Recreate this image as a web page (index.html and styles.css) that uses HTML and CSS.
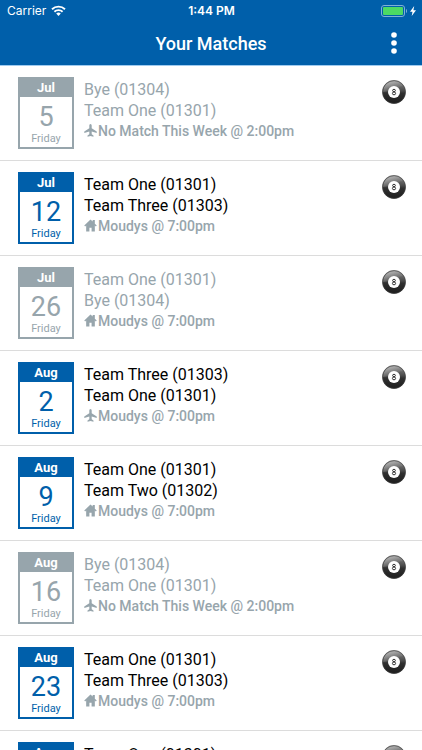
FILE: index.html
```html
<!DOCTYPE html>
<html lang="en">
<head>
    <meta charset="UTF-8">
    <meta name="viewport" content="width=device-width, initial-scale=1">
    <title>Your Matches</title>
    <link rel="stylesheet" href="styles.css">
</head>
<body>
<!-- shared icons -->
<svg class="sprite" aria-hidden="true">
    <defs>
        <linearGradient id="ballShade" x1="0" y1="0" x2="0" y2="1">
            <stop offset="0" stop-color="#8c8c8c"/>
            <stop offset="0.45" stop-color="#4a4a4a"/>
            <stop offset="0.55" stop-color="#303030"/>
            <stop offset="1" stop-color="#1c1c1c"/>
        </linearGradient>
        <linearGradient id="ballShine" x1="0" y1="0" x2="1" y2="1">
            <stop offset="0" stop-color="#fff" stop-opacity="0.5"/>
            <stop offset="0.6" stop-color="#fff" stop-opacity="0.1"/>
        </linearGradient>
    </defs>
    <symbol id="plane" viewBox="0 0 24 24">
        <path d="M23.500 16.500v-2.800L14.200 8V3.200C14.200 1.400 13.300 0 12 0S9.800 1.400 9.800 3.200V8L0.500 13.700v2.800l9.300-2.700v5.200L6.500 21.300V23.500l5.500-1.500 5.500 1.500v-2.200L14.200 19v-5.200z"/>
    </symbol>
    <symbol id="home" viewBox="0 0 24 24">
        <path d="M12 1L0.500 12l1.600 1.800L4 12.200V23h6v-7h4v7h6V12.200l1.900 1.600 1.600-1.800L20 8.600V2h-4v2.800z"/>
    </symbol>
    <symbol id="ball" viewBox="0 0 24 24">
        <circle cx="12" cy="12" r="11.700" fill="url(#ballShade)"/>
        <path d="M1 12a11 11 0 0 1 20-6C15 6 10 12 1 12z" fill="url(#ballShine)"/>
        <circle cx="12" cy="12" r="11.500" fill="none" stroke="#444" stroke-width="0.600"/>
        <circle cx="12" cy="12" r="6" fill="#fff"/>
        <ellipse cx="12" cy="10.500" rx="1.400" ry="1.200" fill="none" stroke="#333" stroke-width="1"/>
        <ellipse cx="12" cy="13.400" rx="1.600" ry="1.400" fill="none" stroke="#333" stroke-width="1"/>
    </symbol>
</svg>

<header class="header">
    <div class="status">
        <div class="carrier">
            Carrier
            <svg class="wifi" viewBox="0 0 15 11" fill="none" stroke="#fff" stroke-width="1.900">
                <path d="M1 4.200a9.400 9.400 0 0 1 13 0M3.400 6.700a6 6 0 0 1 8.200 0"/>
                <path d="M7.500 11L5.200 8.600a3.400 3.400 0 0 1 4.600 0z" fill="#fff" stroke="none"/>
            </svg>
        </div>
        <div class="time">1:44 PM</div>
        <div class="power">
            <svg class="battery" viewBox="0 0 26 12">
                <rect x="0.500" y="0.500" width="23" height="11" rx="2.500" fill="none" stroke="#7fb0d6"/>
                <rect x="2" y="2" width="20" height="8" rx="1" fill="#4cd964"/>
                <path d="M25 4v4c1.300-0.500 1.300-3.500 0-4z" fill="#7fb0d6"/>
            </svg>
            <svg class="bolt" viewBox="0 0 6 10"><path d="M4.200 0L0 5.700h2.500L1.700 10 6 4.200H3.400z" fill="#fff"/></svg>
        </div>
    </div>
    <div class="navbar">
        <h1 class="title">Your Matches</h1>
        <button type="button" class="menu" aria-label="Menu">
            <svg viewBox="0 0 6 22" fill="#fff"><circle cx="3" cy="3" r="2.800"/><circle cx="3" cy="11" r="2.800"/><circle cx="3" cy="19" r="2.800"/></svg>
        </button>
    </div>
</header>

<main class="matches">
    <article class="match past">
        <div class="date"><div class="month">Jul</div><div class="day">5</div><div class="weekday">Friday</div></div>
        <div class="info">
            <div class="team">Bye (01304)</div>
            <div class="team">Team One (01301)</div>
            <div class="venue"><svg class="place"><use href="#plane"/></svg>No Match This Week @ 2:00pm</div>
        </div>
        <svg class="ball"><use href="#ball"/></svg>
    </article>
    <article class="match">
        <div class="date"><div class="month">Jul</div><div class="day">12</div><div class="weekday">Friday</div></div>
        <div class="info">
            <div class="team">Team One (01301)</div>
            <div class="team">Team Three (01303)</div>
            <div class="venue"><svg class="place"><use href="#home"/></svg>Moudys @ 7:00pm</div>
        </div>
        <svg class="ball"><use href="#ball"/></svg>
    </article>
    <article class="match past">
        <div class="date"><div class="month">Jul</div><div class="day">26</div><div class="weekday">Friday</div></div>
        <div class="info">
            <div class="team">Team One (01301)</div>
            <div class="team">Bye (01304)</div>
            <div class="venue"><svg class="place"><use href="#home"/></svg>Moudys @ 7:00pm</div>
        </div>
        <svg class="ball"><use href="#ball"/></svg>
    </article>
    <article class="match">
        <div class="date"><div class="month">Aug</div><div class="day">2</div><div class="weekday">Friday</div></div>
        <div class="info">
            <div class="team">Team Three (01303)</div>
            <div class="team">Team One (01301)</div>
            <div class="venue"><svg class="place"><use href="#plane"/></svg>Moudys @ 7:00pm</div>
        </div>
        <svg class="ball"><use href="#ball"/></svg>
    </article>
    <article class="match">
        <div class="date"><div class="month">Aug</div><div class="day">9</div><div class="weekday">Friday</div></div>
        <div class="info">
            <div class="team">Team One (01301)</div>
            <div class="team">Team Two (01302)</div>
            <div class="venue"><svg class="place"><use href="#home"/></svg>Moudys @ 7:00pm</div>
        </div>
        <svg class="ball"><use href="#ball"/></svg>
    </article>
    <article class="match past">
        <div class="date"><div class="month">Aug</div><div class="day">16</div><div class="weekday">Friday</div></div>
        <div class="info">
            <div class="team">Bye (01304)</div>
            <div class="team">Team One (01301)</div>
            <div class="venue"><svg class="place"><use href="#plane"/></svg>No Match This Week @ 2:00pm</div>
        </div>
        <svg class="ball"><use href="#ball"/></svg>
    </article>
    <article class="match">
        <div class="date"><div class="month">Aug</div><div class="day">23</div><div class="weekday">Friday</div></div>
        <div class="info">
            <div class="team">Team One (01301)</div>
            <div class="team">Team Three (01303)</div>
            <div class="venue"><svg class="place"><use href="#home"/></svg>Moudys @ 7:00pm</div>
        </div>
        <svg class="ball"><use href="#ball"/></svg>
    </article>
    <article class="match">
        <div class="date"><div class="month">Aug</div><div class="day">30</div><div class="weekday">Friday</div></div>
        <div class="info">
            <div class="team">Team One (01301)</div>
            <div class="team">Team Two (01302)</div>
            <div class="venue"><svg class="place"><use href="#home"/></svg>Moudys @ 7:00pm</div>
        </div>
        <svg class="ball"><use href="#ball"/></svg>
    </article>
</main>
</body>
</html>
```
FILE: styles.css
```css
*{
    box-sizing: border-box;
}
body{
    display: flex;
    flex-direction: column;
    height: 100vh;
    margin: 0;
    background-color: #fff;
    color: #000;
    font-family: Roboto, "Liberation Sans", sans-serif;
}
svg{
    display: block;
}
.sprite{
    position: absolute;
    width: 0;
    height: 0;
}

/* header */
.header{
    flex: none;
    background-color: #005faa;
    border-bottom: 1px solid #9fcbf0;
    color: #fff;
}
.status{
    display: grid;
    grid-template-columns: 1fr auto 1fr;
    align-items: center;
    height: 21px;
    padding: 0 6px 0 7px;
    font-family: Inter, "Liberation Sans", sans-serif;
    font-size: 12px;
}
.carrier, .power{
    display: flex;
    align-items: center;
    gap: 5px;
}
.time{
    font-weight: 600;
}
.power{
    justify-content: flex-end;
    gap: 3px;
}
.wifi{
    width: 15px;
    height: 11px;
}
.battery{
    width: 26px;
    height: 12px;
}
.bolt{
    width: 6px;
    height: 10px;
}
.navbar{
    display: grid;
    grid-template-columns: 1fr auto 1fr;
    align-items: center;
    height: 44px;
    padding: 0 20px;
}
.title{
    grid-column: 2;
    margin: 0;
    font-size: 18px;
    font-weight: 500;
}
.menu{
    justify-self: end;
    padding: 0 5px;
    border: 0;
    background: none;
}
.menu svg{
    width: 6px;
    height: 22px;
}

/* match list */
.matches{
    flex: 1;
    min-height: 0;
    overflow-y: auto;
    scrollbar-width: none;
}
.match{
    display: flex;
    align-items: flex-start;
    gap: 10px;
    padding: 11px 16px 11px 18px;
    border-bottom: 1px solid #dcdcdc;
}
.date{
    width: 56px;
    border: 2px solid #005faa;
    color: #005faa;
    text-align: center;
}
.month{
    background-color: #005faa;
    color: #fff;
    font-size: 13px;
    font-weight: 700;
    line-height: 18px;
}
.day{
    padding-top: 5px;
    font-size: 27px;
    line-height: 30px;
}
.weekday{
    padding-bottom: 1px;
    font-size: 11px;
    line-height: 14px;
}
.info{
    flex: 1;
    padding-top: 2px;
}
.team{
    font-size: 16px;
    line-height: 21px;
}
.venue{
    display: flex;
    align-items: center;
    color: #97a5ac;
    font-size: 14px;
    font-weight: 500;
    line-height: 20px;
}
.place{
    width: 13px;
    height: 13px;
    margin: 0 1px 2px 0;
    fill: currentColor;
}
.ball{
    width: 24px;
    height: 24px;
    margin-top: 3px;
}

/* matches that are over or a bye */
.past .date{
    border-color: #97a5ac;
    color: #97a5ac;
}
.past .month{
    background-color: #97a5ac;
}
.past .team{
    color: #97a5ac;
}
```
